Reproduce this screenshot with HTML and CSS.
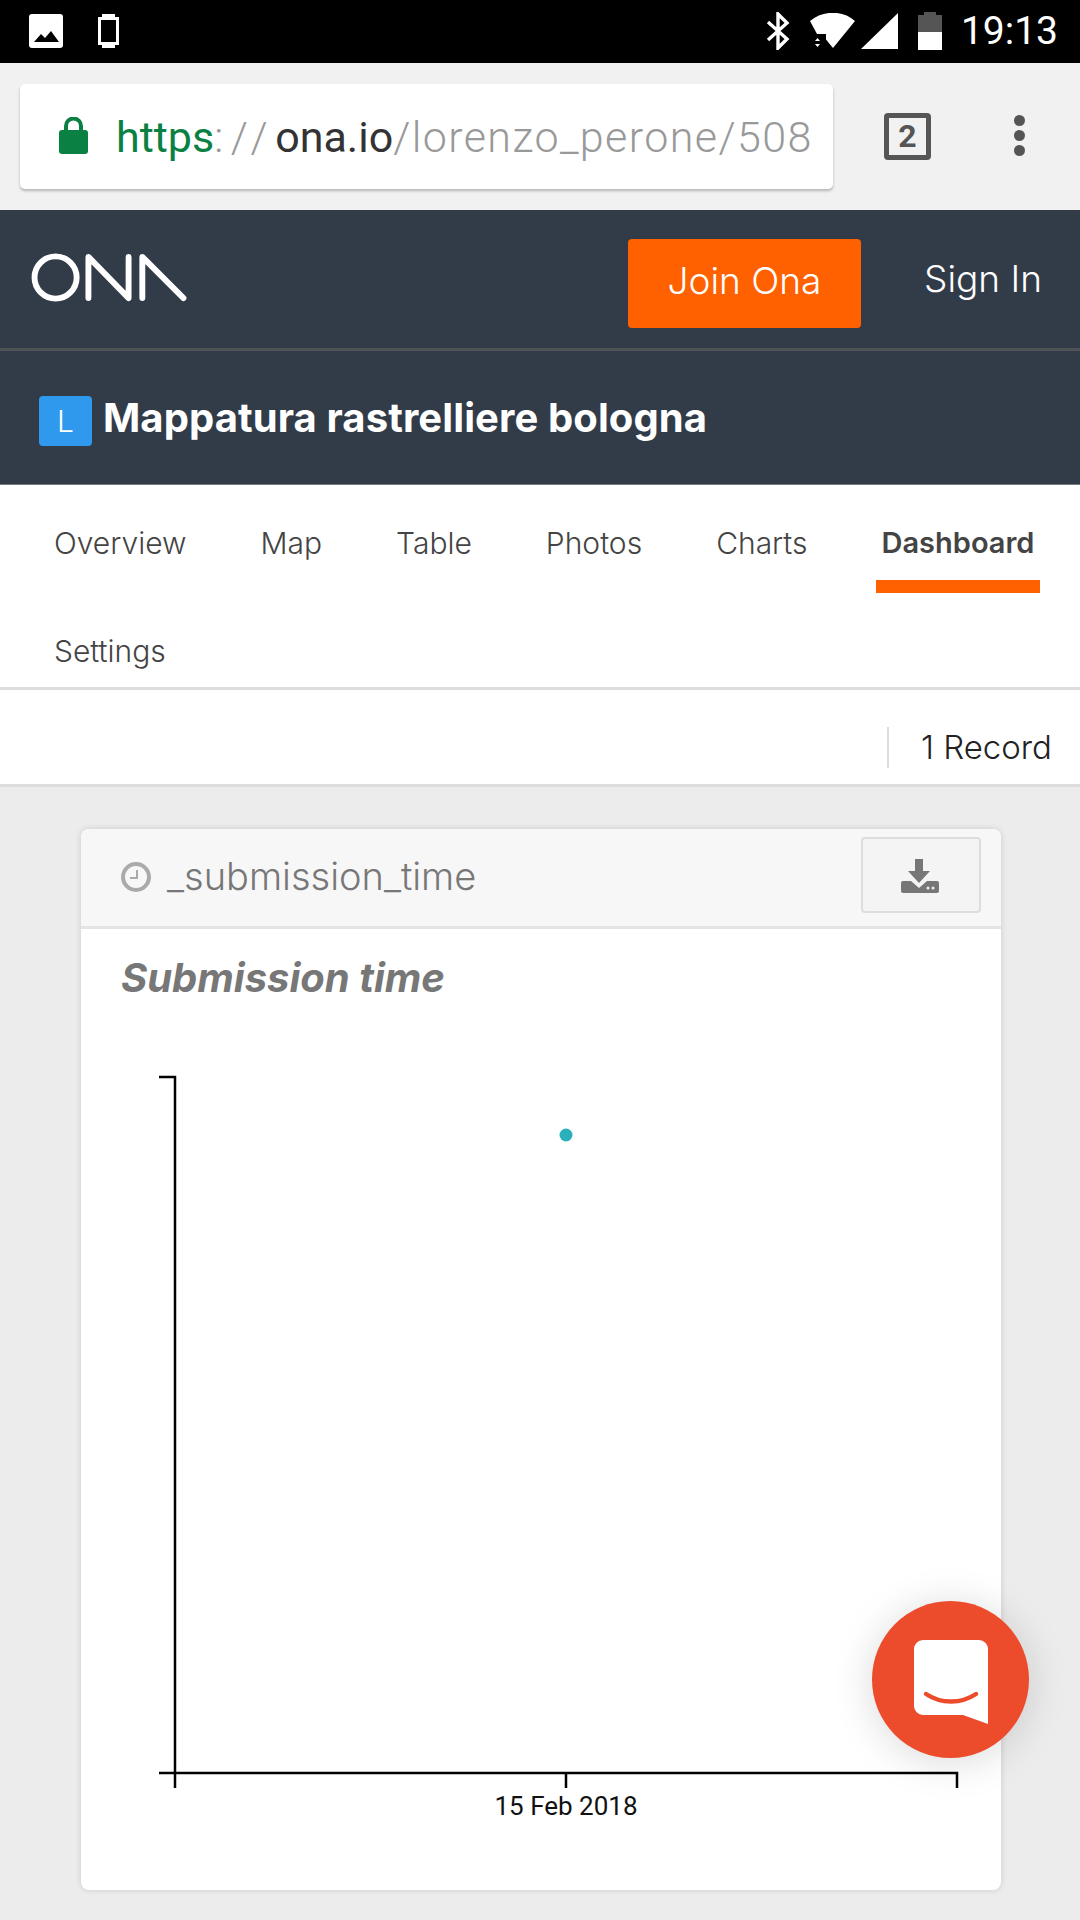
FILE: index.html
```html
<!DOCTYPE HTML>
<html lang="en">
<head>
    <meta charset="UTF-8">
    <link rel="stylesheet" href="styles.css">
    <title>Mappatura rastrelliere bologna</title>
</head>
<body>
<div class="status-bar">
    <div class="status-left">
        <svg class="ic-photo" width="34" height="34" viewBox="0 0 34 34">
            <rect width="34" height="34" rx="3" fill="#fff"/>
            <path d="M5 28l7-8 4 4 6-7 8 11z" fill="#000"/>
        </svg>
        <svg class="ic-vibrate" width="21" height="34" viewBox="0 0 21 34">
            <path d="M4 0h13v3H4zM4 31h13v3H4z" fill="#fff"/>
            <rect x="1.500" y="4.500" width="18" height="25" fill="none" stroke="#fff" stroke-width="3"/>
        </svg>
    </div>
    <div class="status-right">
        <svg width="24" height="38" viewBox="0 0 24 38">
            <path d="M2 10l19 17-9 9V2l9 9L2 28" fill="none" stroke="#fff" stroke-width="3.400"/>
        </svg>
        <svg class="ic-wifi" width="46" height="36" viewBox="0 0 46 36">
            <path d="M0 8C13-3 33-3 45 8L23 35l-7-8.500V21H7z" fill="#fff"/>
            <path d="M5 28l2.500-3 2.500 3zM5 31l2.500 3 2.500-3z" fill="#fff"/>
        </svg>
        <svg class="ic-signal" width="37" height="36" viewBox="0 0 37 36">
            <path d="M37 0v36H0z" fill="#fff"/>
        </svg>
        <svg class="ic-battery" width="24" height="38" viewBox="0 0 24 38">
            <path d="M6 0h12v3h6v17H0V3h6z" fill="#555"/>
            <path d="M0 20h24v18H0z" fill="#fff"/>
        </svg>
        <span class="clock">19:13</span>
    </div>
</div>

<div class="toolbar">
    <div class="url-box">
        <svg class="lock" width="29" height="37" viewBox="0 0 29 37">
            <path d="M7 14V9a7.500 7.500 0 0 1 15 0v5" fill="none" stroke="#0b8043" stroke-width="4"/>
            <rect y="13" width="29" height="24" rx="3" fill="#0b8043"/>
        </svg>
        <div class="url"><span class="green">https</span><span class="sep">://</span><span class="dark">ona.io</span><span class="rest">/lorenzo_perone/508</span></div>
    </div>
    <div class="tabs-btn">2</div>
    <div class="menu-dots"><i></i><i></i><i></i></div>
</div>

<header class="site-head">
    <div class="top-row">
        <svg class="logo" width="156" height="49" viewBox="0 0 158 50">
            <circle cx="24.500" cy="25" r="21.500" fill="none" stroke="#fff" stroke-width="6"/>
            <path d="M58 46V4l41 42V4M113 46V4l42 42" fill="none" stroke="#fff" stroke-width="6" stroke-linecap="round" stroke-linejoin="round"/>
        </svg>
        <a class="join">Join Ona</a>
        <a class="sign-in">Sign In</a>
    </div>
    <div class="title-row">
        <span class="avatar">L</span>
        <h1>Mappatura rastrelliere bologna</h1>
    </div>
</header>

<nav class="tabs">
    <a>Overview</a>
    <a>Map</a>
    <a>Table</a>
    <a>Photos</a>
    <a>Charts</a>
    <a class="active">Dashboard</a>
    <a>Settings</a>
</nav>

<div class="records"><span>1 Record</span></div>

<main class="content">
    <section class="card">
        <div class="card-head">
            <svg class="ic-clock" width="30" height="30" viewBox="0 0 30 30">
                <circle cx="15" cy="15" r="13" fill="none" stroke="#aaa" stroke-width="4"/>
                <path d="M16 8v8H9" fill="none" stroke="#aaa" stroke-width="2"/>
            </svg>
            <span class="field">_submission_time</span>
            <button class="download">
                <svg width="38" height="36" viewBox="0 0 38 36">
                    <path d="M14 1h8v12h7L18 25 7 13h7z" fill="#777"/>
                    <path d="M2 23h8l8 7 8-7h10a2 2 0 0 1 2 2v8a2 2 0 0 1-2 2H2a2 2 0 0 1-2-2v-8a2 2 0 0 1 2-2z" fill="#777"/>
                    <circle cx="27" cy="30" r="1.500" fill="#eee"/>
                    <circle cx="32" cy="30" r="1.500" fill="#eee"/>
                </svg>
            </button>
        </div>
        <h2>Submission time</h2>
        <svg class="chart" width="918" height="770" viewBox="0 0 918 770">
            <g fill="none" stroke="#000" stroke-width="2.500">
                <path d="M78 17h16v711"/>
                <path d="M78 713h798v15"/>
                <path d="M485 713v15"/>
            </g>
            <circle cx="485" cy="75" r="6.500" fill="#2ab0bb"/>
            <text x="485" y="755" text-anchor="middle">15 Feb 2018</text>
        </svg>
    </section>
</main>

<div class="chat-fab">
    <svg width="74" height="84" viewBox="0 0 74 84">
        <path d="M9 0h56a9 9 0 0 1 9 9v75l-25-9H9a9 9 0 0 1-9-9V9a9 9 0 0 1 9-9z" fill="#fff"/>
        <path d="M12 54c15 10 35 10 50 0" fill="none" stroke="#ec4c2c" stroke-width="4.500" stroke-linecap="round"/>
    </svg>
</div>
</body>
</html>
```

FILE: styles.css
```css
* {
    box-sizing: border-box;
}

html, body {
    margin: 0;
    height: 1920px;
    overflow: hidden;
}

body {
    position: relative;
    background: #ececec;
    font-family: Inter, Lato, sans-serif;
    color: #333;
}

.status-bar {
    height: 63px;
    background: #000;
    display: flex;
    justify-content: space-between;
    align-items: center;
    padding: 0 22px 1px 29px;
}

.status-left {
    display: flex;
    gap: 35px;
}

.status-right {
    display: flex;
    align-items: center;
    gap: 14px;
}

.ic-wifi {
    margin-left: 6px;
}

.ic-signal {
    margin-left: -9px;
}

.ic-battery {
    margin-left: 6px;
}

.clock {
    font-family: Roboto, sans-serif;
    font-size: 39px;
    color: #fff;
    margin-left: 5px;
}

.toolbar {
    height: 147px;
    background: #f1f1f1;
    display: flex;
    align-items: flex-start;
    padding: 21px 0 0 20px;
}

.url-box {
    width: 813px;
    height: 105px;
    background: #fff;
    border-radius: 5px;
    box-shadow: 0 2px 3px rgba(0, 0, 0, .25);
    display: flex;
    align-items: center;
    padding: 0 8px 0 39px;
}

.lock {
    flex: none;
    margin: -2px 28px 0 0;
}

.url {
    font-family: Roboto, sans-serif;
    font-size: 43px;
    font-weight: 300;
    color: #999;
    white-space: nowrap;
}

.green {
    color: #0b8043;
    font-weight: 400;
}

.sep {
    letter-spacing: 7.500px;
}

.dark {
    color: #333;
    font-weight: 400;
}

.rest {
    letter-spacing: 1.400px;
}

.tabs-btn {
    width: 47px;
    height: 47px;
    margin: 29px 0 0 51px;
    border: 5px solid #555;
    border-radius: 4px;
    font-family: Roboto, sans-serif;
    font-size: 32px;
    font-weight: 700;
    line-height: 37px;
    text-align: center;
    color: #555;
}

.menu-dots {
    display: flex;
    flex-direction: column;
    gap: 4px;
    margin: 31px 0 0 83px;
}

.menu-dots i {
    width: 11px;
    height: 11px;
    border-radius: 50%;
    background: #555;
}

.site-head {
    background: #323c49;
    color: #fff;
    height: 275px;
    border-bottom: 1px solid #777;
}

.top-row {
    height: 141px;
    border-bottom: 3px solid #4f5358;
    display: flex;
    align-items: center;
    padding: 0 41px 0 31px;
}

.logo {
    margin-top: -3px;
}

.join {
    width: 233px;
    height: 89px;
    margin: 8px 1px 0 auto;
    background: #ff6000;
    border-radius: 4px;
    font-size: 37px;
    font-weight: 300;
    line-height: 84px;
    text-align: center;
}

.sign-in {
    width: 115px;
    font-size: 37px;
    font-weight: 300;
    white-space: nowrap;
    margin: -2px 0 0 62px;
}

.title-row {
    display: flex;
    align-items: center;
    height: 133px;
    padding: 0 0 0 39px;
}

.avatar {
    width: 53px;
    height: 50px;
    margin: 6px 11px 0 0;
    background: #2f99ed;
    border-radius: 4px;
    font-size: 30px;
    font-weight: 300;
    line-height: 50px;
    text-align: center;
}

h1 {
    margin: 0;
    font-size: 40px;
    font-weight: 700;
    letter-spacing: .1px;
}

.tabs {
    background: #fff;
    height: 205px;
    border-bottom: 3px solid #ddd;
    display: flex;
    flex-wrap: wrap;
    align-content: flex-start;
    column-gap: 62px;
    padding-left: 48px;
}

.tabs a {
    height: 108px;
    padding: 40px 6px 0;
    font-size: 30px;
    font-weight: 300;
    line-height: 36px;
    color: #444;
}

.tabs a:last-child {
    height: 94px;
    padding-top: 40px;
}

.tabs a.active {
    font-size: 29px;
    font-weight: 600;
    border-bottom: 13px solid #ff6000;
}

.records {
    background: #fff;
    height: 97px;
    border-bottom: 3px solid #ddd;
    display: flex;
    justify-content: flex-end;
    align-items: flex-end;
    padding: 0 28px 16px 0;
}

.records span {
    border-left: 2px solid #ddd;
    padding-left: 32px;
    font-size: 33px;
    font-weight: 300;
    line-height: 41px;
    color: #222;
}

.content {
    padding: 42px 79px 0 81px;
}

.card {
    height: 1061px;
    background: #fff;
    border-radius: 8px;
    box-shadow: 0 0 6px rgba(0, 0, 0, .14);
}

.card-head {
    height: 100px;
    background: #f7f7f7;
    border-bottom: 3px solid #e4e4e4;
    border-radius: 8px 8px 0 0;
    display: flex;
    align-items: center;
    padding: 0 18px 2px 40px;
}

.field {
    margin: -1px 0 0 16px;
    font-size: 38px;
    font-weight: 300;
    color: #777;
}

.download {
    width: 120px;
    height: 76px;
    margin: -3px 2px 0 auto;
    background: #f4f4f4;
    border: 2px solid #ddd;
    border-radius: 4px;
    padding: 4px 2px 0 0;
}

h2 {
    margin: 0;
    padding: 26px 0 0 40px;
    height: 131px;
    font-size: 40px;
    line-height: 46px;
    font-style: italic;
    font-weight: 700;
    color: #777;
}

.chart {
    display: block;
}

.chart text {
    font-family: Roboto, sans-serif;
    font-size: 26px;
    fill: #111;
}

.chat-fab {
    position: absolute;
    left: 872px;
    top: 1601px;
    width: 157px;
    height: 157px;
    border-radius: 50%;
    background: #ec4c2c;
    box-shadow: 0 4px 40px rgba(0, 0, 0, .15);
    display: flex;
    justify-content: center;
    padding-top: 39px;
}
```
